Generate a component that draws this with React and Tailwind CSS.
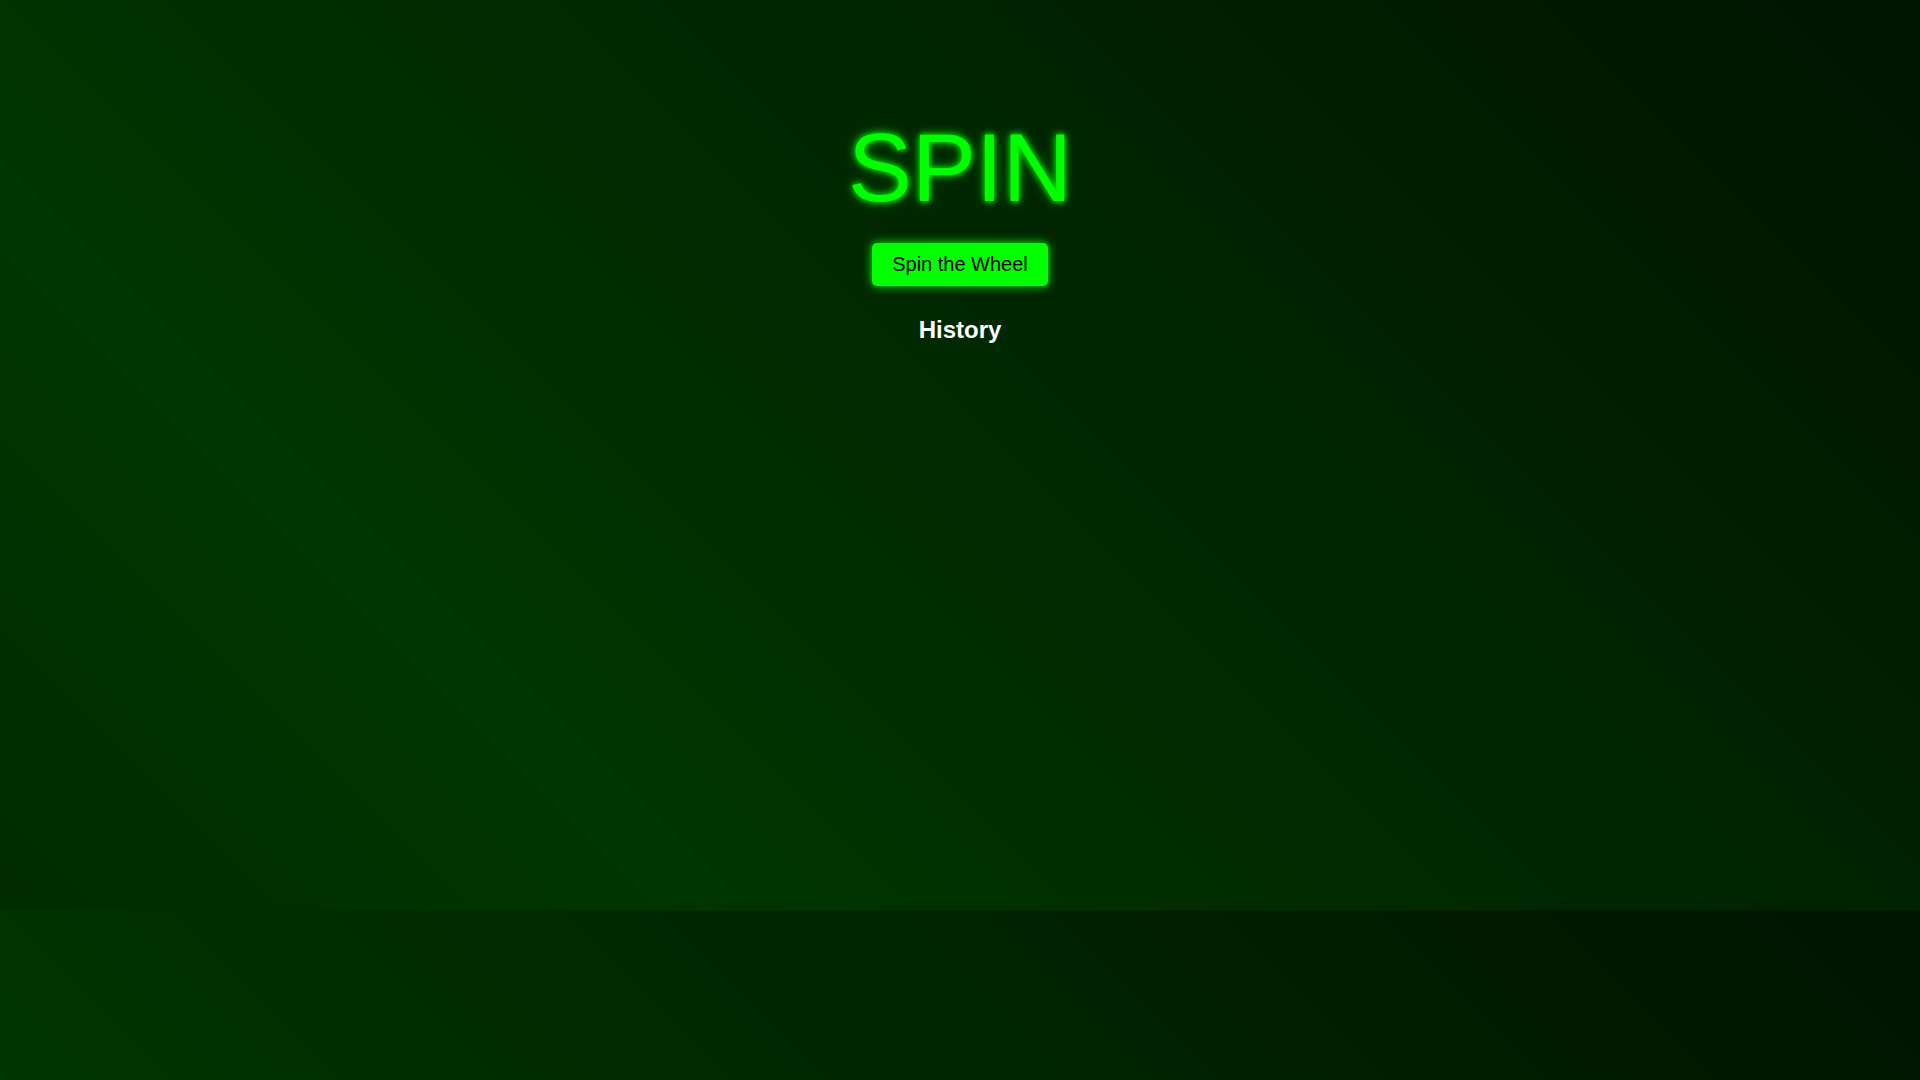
export default function App() {
  return (
    <div
      className="min-h-screen w-full bg-[linear-gradient(45deg,#002c00_0%,#003600_25%,#001400_100%)] bg-[length:100%_910px] bg-repeat"
      style={{ fontFamily: '"Liberation Sans", Arial, sans-serif' }}
    >
      <div className="flex flex-col items-center pt-[113px]">
        <h1 className="text-[96px] leading-[1.15] text-[#00ff00] [text-shadow:0_0_6px_#00ff00,0_0_12px_rgba(0,255,0,0.5)]">
          SPIN
        </h1>
        <button className="mt-[20px] rounded-[5px] bg-[#00ff00] px-5 py-[10px] text-[20px] leading-[23px] text-black shadow-[0_0_10px_#00ff00]">
          Spin the Wheel
        </button>
        <h2 className="mt-[30px] text-[24px] font-bold leading-[1.15] text-white">History</h2>
        <ul className="mt-4"></ul>
      </div>
    </div>
  )
}
